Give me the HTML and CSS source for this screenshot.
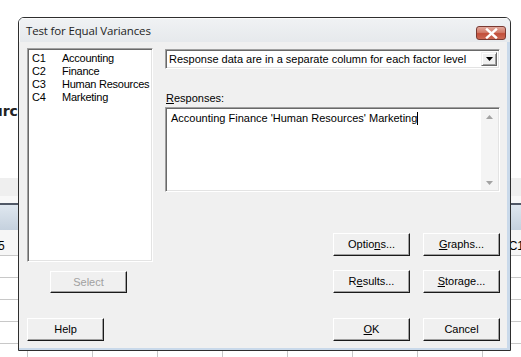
FILE: index.html
```html
<!DOCTYPE html>
<html>
<head>
<meta charset="utf-8">
<link rel="stylesheet" href="styles.css">
</head>
<body>
<div class="sheet">
  <div class="sheet-top"><span class="src">Source</span></div>
  <div class="band1"></div>
  <div class="band2"></div>
  <div class="hdr"></div>
  <div class="row row-first"><span class="cell-l">5</span><span class="cell-r">C1</span></div>
  <div class="row"></div>
  <div class="row"></div>
  <div class="row"></div>
  <div class="row"></div>
  <div class="row"></div>
</div>

<div class="win">
  <div class="titlebar">
    <span class="title">Test for Equal Variances</span>
    <span class="close">
      <svg width="13" height="11" viewBox="0 0 13 11"><path d="M2 1.5 L11 9.5 M11 1.5 L2 9.5" stroke="#fff" stroke-width="2.4" stroke-linecap="square"/></svg>
    </span>
  </div>
  <div class="body">
    <div class="col-left">
      <div class="listbox">
        <div class="item"><span class="cn">C1</span><span>Accounting</span></div>
        <div class="item"><span class="cn">C2</span><span>Finance</span></div>
        <div class="item"><span class="cn">C3</span><span>Human Resources</span></div>
        <div class="item"><span class="cn">C4</span><span>Marketing</span></div>
      </div>
      <div class="btn btn-select disabled">Select</div>
      <div class="btn btn-help">Help</div>
    </div>
    <div class="col-right">
      <div class="combo">
        <span class="combo-text">Response data are in a separate column for each factor level</span>
        <span class="combo-arrow"><svg width="7" height="4" viewBox="0 0 7 4"><path d="M0 0 H7 L3.5 4 Z" fill="#000"/></svg></span>
      </div>
      <div class="label"><u>R</u>esponses:</div>
      <div class="textarea">
        <div class="ta-text">Accounting Finance 'Human Resources' Marketing<span class="caret"></span></div>
        <div class="vscroll">
          <span class="sarrow"><svg width="7" height="4" viewBox="0 0 7 4"><path d="M0 4 H7 L3.5 0 Z" fill="#a3a3a3"/></svg></span>
          <span class="sarrow"><svg width="7" height="4" viewBox="0 0 7 4"><path d="M0 0 H7 L3.5 4 Z" fill="#a3a3a3"/></svg></span>
        </div>
      </div>
      <div class="btn-row row1">
        <div class="btn">Optio<u>n</u>s...</div>
        <div class="btn"><u>G</u>raphs...</div>
      </div>
      <div class="btn-row row2">
        <div class="btn">R<u>e</u>sults...</div>
        <div class="btn"><u>S</u>torage...</div>
      </div>
      <div class="btn-row row3">
        <div class="btn"><u>O</u>K</div>
        <div class="btn">Cancel</div>
      </div>
    </div>
  </div>
</div>
</body>
</html>
```
FILE: styles.css
```css
html, body {
  margin: 0;
  padding: 0;
}
body {
  width: 521px;
  height: 357px;
  overflow: hidden;
  position: relative;
  background: #fff;
  font-family: "Liberation Sans", Arial, sans-serif;
  font-size: 11px;
  color: #000;
}

/* background worksheet */
.sheet {
  width: 521px;
  overflow: hidden;
}
.sheet-top {
  height: 178px;
  background: #fff;
  position: relative;
  white-space: nowrap;
}
.src {
  display: block;
  padding-top: 103px;
  margin-left: -27px;
  font-weight: bold;
  font-size: 14px;
  color: #222;
  font-family: "DejaVu Sans", sans-serif;
}
.band1 {
  height: 18px;
  background: #efefef;
}
.band2 {
  height: 7px;
  background: #f8f8f8;
}
.hdr {
  height: 27px;
  border-top: 2px solid #505866;
  box-sizing: border-box;
  background: linear-gradient(#dfe7ef, #c5d1de);
}
.row {
  height: 22px;
  border-bottom: 1px solid #c8c8c8;
  box-sizing: border-box;
  background-image: linear-gradient(to right, #c8c8c8 1px, transparent 1px);
  background-size: 65px 100%;
  background-position: 27px 0;
  display: flex;
  justify-content: space-between;
  align-items: center;
}
.row-first {
  height: 26px;
  background: #f6f6f6;
  font-size: 12px;
  padding-top: 6px;
}
.cell-l {
  margin-left: -2px;
}
.cell-r {
  margin-right: -3px;
}

/* dialog window */
.win {
  position: absolute;
  left: 18px;
  top: 17px;
  width: 493px;
  height: 334px;
  box-sizing: border-box;
  border: 1px solid #2e2e2e;
  border-radius: 6px 6px 0 0;
  background: #c9d9ea;
  display: flex;
  flex-direction: column;
  overflow: hidden;
}
.titlebar {
  height: 24px;
  flex: none;
  background: linear-gradient(#f0f2f4, #e6e9ec);
  display: flex;
  align-items: center;
  justify-content: space-between;
  padding: 0 4px 0 7px;
  box-shadow: inset 1px 1px 0 #fbfbfb;
}
.title {
  font-family: "Open Sans", sans-serif;
  font-size: 11.5px;
  color: #1e1e1e;
  margin-top: 1px;
  letter-spacing: -0.15px;
}
.close {
  width: 30px;
  height: 14px;
  margin-top: 6px;
  border: 1px solid #7a3a32;
  border-radius: 3px;
  background: linear-gradient(#e2a89c 0%, #d27c6a 45%, #c24e3a 55%, #cc6a55 100%);
  display: flex;
  align-items: center;
  justify-content: center;
  box-sizing: border-box;
}
.body {
  flex: 1;
  background: #f0f0f0;
  margin: 0 3px 2px 0;
  display: flex;
  padding: 6px 0 0 8px;
  gap: 12px;
}

.col-left {
  width: 126px;
  display: flex;
  flex-direction: column;
}
.listbox {
  height: 214px;
  box-sizing: border-box;
  background: #fff;
  border: 1px solid;
  border-color: #a0a0a0 #fff #fff #a0a0a0;
  box-shadow: inset 1px 1px 0 #696969, inset -1px -1px 0 #e3e3e3;
  padding: 3px 0 0 4px;
}
.item {
  height: 13px;
  line-height: 13px;
  display: flex;
  white-space: nowrap;
  letter-spacing: -0.25px;
}
.cn {
  width: 30px;
  flex: none;
}

.btn {
  height: 23px;
  width: 77px;
  box-sizing: border-box;
  border: 1px solid;
  border-color: #fff #1a1a1a #1a1a1a #fff;
  box-shadow: inset -1px -1px 0 #a0a0a0;
  background: #f0f0f0;
  display: flex;
  align-items: center;
  justify-content: center;
  padding-bottom: 1px;
}
.btn-select {
  margin: 9px 0 0 23px;
  height: 22px;
}
.disabled {
  color: #a0a0a0;
}
.btn-help {
  margin-top: 25px;
}

.col-right {
  width: 335px;
  display: flex;
  flex-direction: column;
}
.combo {
  margin-top: 1px;
  height: 20px;
  box-sizing: border-box;
  background: #fff;
  border: 1px solid;
  border-color: #a0a0a0 #fff #fff #a0a0a0;
  box-shadow: inset 1px 1px 0 #696969, inset -1px -1px 0 #e3e3e3;
  display: flex;
  align-items: center;
  justify-content: space-between;
  padding: 0 2px 0 3px;
  white-space: nowrap;
}
.combo-arrow {
  width: 16px;
  height: 14px;
  box-sizing: border-box;
  border: 1px solid;
  border-color: #f0f0f0 #696969 #696969 #f0f0f0;
  box-shadow: inset 1px 1px 0 #fff, inset -1px -1px 0 #a0a0a0;
  background: #f0f0f0;
  display: flex;
  align-items: center;
  justify-content: center;
}
.label {
  margin-top: 23px;
  height: 13px;
  line-height: 13px;
  padding-left: 1px;
}
.textarea {
  margin-top: 2px;
  height: 85px;
  box-sizing: border-box;
  background: #fff;
  border: 1px solid;
  border-color: #a0a0a0 #fff #fff #a0a0a0;
  box-shadow: inset 1px 1px 0 #696969, inset -1px -1px 0 #e3e3e3;
  display: flex;
  justify-content: space-between;
  padding: 2px 1px 1px 2px;
}
.ta-text {
  padding: 2px 0 0 3px;
  line-height: 13px;
  height: 13px;
  display: flex;
  align-items: center;
  white-space: nowrap;
}
.caret {
  display: inline-block;
  width: 1px;
  height: 13px;
  background: #000;
}
.vscroll {
  width: 17px;
  background: #f4f4f4;
  display: flex;
  flex-direction: column;
  justify-content: space-between;
  align-items: center;
  padding: 5px 0 5px;
}
.sarrow {
  display: flex;
}
.btn-row {
  display: flex;
  justify-content: flex-end;
  gap: 13px;
}
.row1 {
  margin-top: 41px;
}
.row2 {
  margin-top: 14px;
}
.row3 {
  margin-top: 25px;
}
```
